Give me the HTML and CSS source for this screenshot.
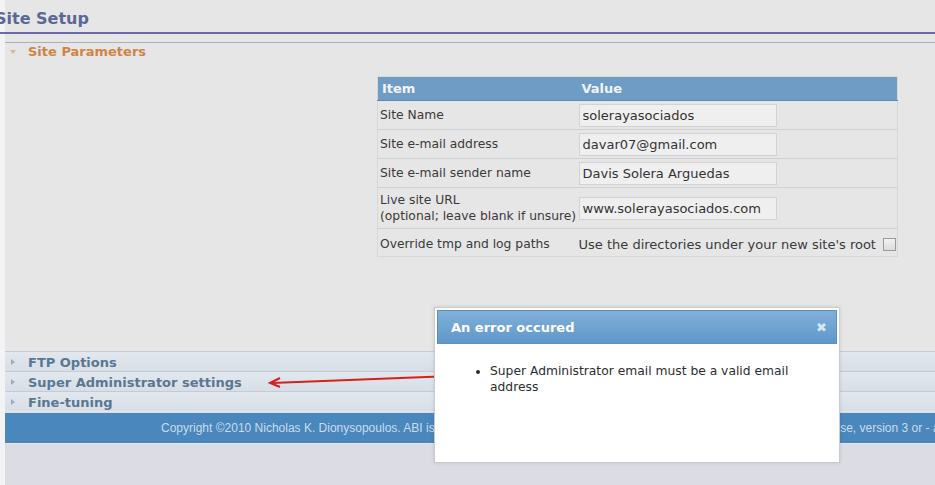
FILE: index.html
```html
<!DOCTYPE html>
<html lang="en">
<head>
  <meta charset="UTF-8">
  <title>Site Setup</title>
  <link rel="stylesheet" href="styles.css">
</head>
<body>

  <div class="page">
    <h1 class="page-title">Site Setup</h1>
    <div class="rule"></div>

    <!-- Open panel -->
    <div class="panel-head open"><span class="caret-down"></span>Site Parameters</div>
    <div class="panel-body">
      <table class="params">
        <thead>
          <tr>
            <th class="col-item">Item</th>
            <th>Value</th>
          </tr>
        </thead>
        <tbody>
          <tr>
            <td>Site Name</td>
            <td class="val"><input type="text" value="solerayasociados"></td>
          </tr>
          <tr>
            <td>Site e-mail address</td>
            <td class="val"><input type="text" value="davar07@gmail.com"></td>
          </tr>
          <tr>
            <td>Site e-mail sender name</td>
            <td class="val"><input type="text" value="Davis Solera Arguedas"></td>
          </tr>
          <tr class="tall">
            <td>Live site URL<br>(optional; leave blank if unsure)</td>
            <td class="val"><input type="text" value="www.solerayasociados.com"></td>
          </tr>
          <tr class="last">
            <td class="raise">Override tmp and log paths</td>
            <td class="val">Use the directories under your new site's root <span class="check"></span></td>
          </tr>
        </tbody>
      </table>
    </div>

    <!-- Closed panels -->
    <div class="panel-head closed"><span class="caret-right"></span>FTP Options</div>
    <div class="panel-head closed"><span class="caret-right"></span>Super Administrator settings</div>
    <div class="panel-head closed"><span class="caret-right"></span>Fine-tuning</div>

    <div class="footer">Copyright &copy;2010 Nicholas K. Dionysopoulos. ABI is Free Software, distributed under the terms of the GNU General Public License, version 3 or - at your option - any later version.</div>
  </div>

  <!-- Red annotation arrow -->
  <svg class="arrow" width="200" height="20" viewBox="0 0 200 20">
    <path d="M186 4 L6 11" stroke="#d61f1f" stroke-width="2" fill="none"/>
    <path d="M14 6 L4 11 L14 15" stroke="#d61f1f" stroke-width="2" fill="none"/>
  </svg>

  <!-- Error dialog -->
  <div class="dialog">
    <div class="dialog-title">
      <span>An error occured</span>
      <span class="dialog-close">&#10006;</span>
    </div>
    <ul class="dialog-list">
      <li>Super Administrator email must be a valid email address</li>
    </ul>
  </div>

</body>
</html>
```

FILE: styles.css
```css
/* Global */
* {
  margin: 0;
  padding: 0;
  box-sizing: border-box;
}

body {
  font-family: "DejaVu Sans", Verdana, sans-serif;
  font-size: 12.3px;
  background: #f3f3f5;
  height: 485px;
  overflow: hidden;
  position: relative;
}

.page {
  margin-left: 5px;
  width: 1100px;
  background: #e6e6e6;
  padding-bottom: 60px;
}

/* Title */
.page-title {
  margin-left: -10px;
  font-size: 16px;
  font-weight: bold;
  color: #5b6796;
  height: 34px;
  line-height: 37px;
  border-bottom: 2px solid #6b6aa6;
}

.rule {
  margin-top: 8px;
  border-top: 1px solid #a9aec0;
}

/* Panels */
.panel-head {
  font-size: 13px;
  font-weight: bold;
  padding-left: 23px;
  position: relative;
}

.panel-head.open {
  color: #d08444;
  height: 18px;
  line-height: 18px;
}

.panel-head.closed {
  color: #5a7792;
  height: 20px;
  line-height: 21px;
  border-top: 1px solid #c2cbd6;
  background: linear-gradient(#e3e8ee, #d7dee7);
}

.caret-down {
  position: absolute;
  left: 5px;
  top: 7px;
  border-left: 3px solid transparent;
  border-right: 3px solid transparent;
  border-top: 4px solid #e3b58c;
}

.caret-right {
  position: absolute;
  left: 6px;
  top: 7px;
  border-top: 3px solid transparent;
  border-bottom: 3px solid transparent;
  border-left: 4px solid #a0acbb;
}

.panel-body {
  padding: 15px 0 94px 372px;
}

/* Parameters table */
.params {
  width: 521px;
  table-layout: fixed;
  border-collapse: collapse;
  border: 1px solid #d5d9de;
  color: #3a3a3a;
}

.params th {
  background: #6f9cc5;
  color: #eef4fa;
  font-size: 13px;
  text-align: left;
  height: 24px;
  padding: 0 4px;
  border-bottom: 1px solid #5c87b0;
}

.params .col-item {
  width: 200px;
}

.params td {
  height: 29px;
  padding: 0 2px;
  border-top: 1px solid #cdd2d8;
  white-space: nowrap;
}

.params td.val {
  font-size: 13px;
  padding-left: 1px;
}

.params tr.tall td {
  height: 41px;
  line-height: 16px;
}

.params tr.last td {
  height: 28px;
  padding-top: 3px;
}

.params td.raise {
  padding-top: 0;
}

.params input {
  width: 198px;
  height: 23px;
  border: 1px solid #d3d3d3;
  background: #efefef;
  font-family: "DejaVu Sans", Verdana, sans-serif;
  font-size: 13px;
  color: #333;
  padding: 0 3px;
}

.check {
  display: inline-block;
  width: 13px;
  height: 13px;
  border: 1px solid #9a9a9a;
  background: linear-gradient(#f2f2f2, #dcdcdc);
  vertical-align: -2px;
  margin-left: 3px;
}

/* Footer */
.footer {
  margin-top: 1px;
  height: 31px;
  line-height: 30px;
  background: #4a87bc;
  color: #c9dcee;
  font-family: "Liberation Sans", Arial, sans-serif;
  font-size: 12px;
  padding-left: 156px;
  white-space: nowrap;
  overflow: hidden;
  border-top: 1px solid #d6dee7;
}

/* Below footer area */
body::after {
  content: "";
  position: absolute;
  left: 5px;
  right: 0;
  top: 444px;
  bottom: 0;
  background: #dcdce4;
}

/* Annotation */
.arrow {
  position: absolute;
  left: 266px;
  top: 372px;
  z-index: 2;
}

/* Dialog */
.dialog {
  position: absolute;
  left: 434px;
  top: 307px;
  width: 406px;
  height: 156px;
  background: #ffffff;
  border: 1px solid #c9ccd0;
  padding: 2px;
  box-shadow: 0 0 4px rgba(0, 0, 0, 0.12);
  z-index: 3;
}

.dialog-title {
  height: 34px;
  background: linear-gradient(#81b0da, #5f97cb);
  border: 1px solid #5d8fbf;
  color: #ffffff;
  font-size: 13px;
  font-weight: bold;
  display: flex;
  align-items: center;
  justify-content: space-between;
  padding: 0 9px 0 13px;
}

.dialog-close {
  color: #d7e6f3;
  font-size: 13px;
}

.dialog-list {
  padding: 19px 30px 0 53px;
  color: #2e2e2e;
  font-size: 12.3px;
  line-height: 16px;
}
```
